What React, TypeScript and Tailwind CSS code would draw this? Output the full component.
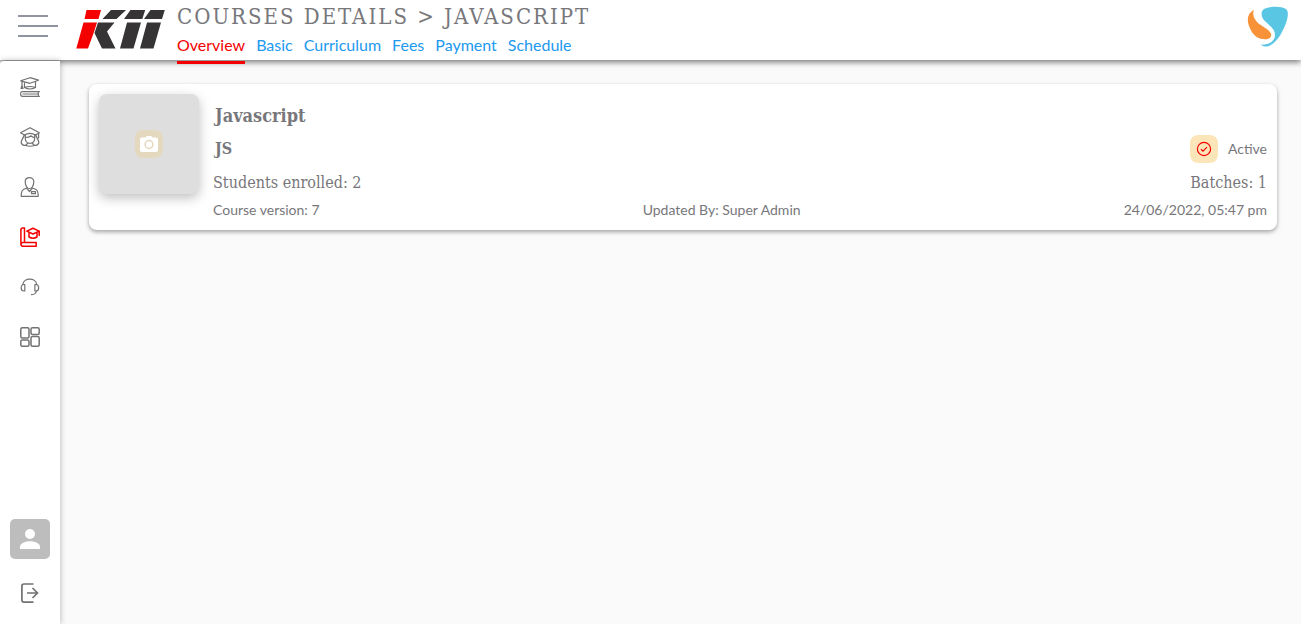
import React from "react";

const slab = "font-['Roboto_Slab','DejaVu_Serif_Condensed','DejaVu_Serif',serif]";

const tabs = ["Overview", "Basic", "Curriculum", "Fees", "Payment", "Schedule"];

function BrandLogo() {
  return (
    <svg viewBox="0 0 90 40" className="h-10 w-[90px]" role="img" aria-label="KII">
      <path fill="#f40000" d="M10.500 1H25L22.500 10H8.500ZM7.500 13.500H21L17.800 23.500L12 39.500H.300Z" />
      <path
        fill="#373435"
        d="M35 1H50L40.500 10H26.500ZM22 13.500H38.500L31 22.500L39.500 39.500H26L18.500 24ZM54.500 1H69.200L66.300 10H48ZM51 13.500H65L57.500 39.500H44ZM74.500 1H88.800L86 10H68ZM71 13.500H85L77.500 39.500H64Z"
      />
    </svg>
  );
}

function SwirlLogo() {
  return (
    <svg viewBox="0 0 42 42" className="h-[42px] w-[42px]" role="img" aria-label="Company">
      <path
        fill="#f79239"
        d="M7 4C1 7-.500 13 2 20C5 28 10 33 16 33C22 34 25 31 24 28C23 24 16 21 11 17C7 13 5 8 7 4Z"
      />
      <path
        fill="#59c6e4"
        d="M17 3C23 0 34 0 39 3C43 6 40 17 35 26C31 34 24 41 18 40.500C16 40.500 15 39.500 14 38.500C22 39.500 28 35 28 29C28 23 23 20 19 16C14 12 13 6 17 3Z"
      />
    </svg>
  );
}

function Icon({ children }: { children: React.ReactNode }) {
  return (
    <svg
      viewBox="0 0 20 20"
      className="h-5 w-5"
      fill="none"
      stroke="currentColor"
      strokeWidth="1.2"
      strokeLinecap="round"
      strokeLinejoin="round"
      aria-hidden="true"
    >
      {children}
    </svg>
  );
}

const navItems = [
  {
    label: "Academics",
    icon: (
      <>
        <path d="M.7 3.800L10 .7L18.500 3.200L10 6.300ZM4.500 5V10.500Q10 8.500 15.500 10.500V5M4.500 10.500Q10 13.500 15.500 10.500M2 4.500V8.500M2 8.500L1 11.500H3Z" />
        <path d="M19.400 14.600H2.500Q.6 14.600.6 16.900Q.6 19.300 2.500 19.300H19.400M18.300 14.800V19.200M3 17H18" />
      </>
    ),
  },
  {
    label: "Students",
    icon: (
      <>
        <path d="M.6 5.800L10 .7L19.400 5.800L15.500 8Q10 4.800 4.500 8ZM18.600 6.300V11" />
        <path d="M5.300 8V11.500C5.300 18 14.700 18 14.700 11.500V8M5.300 10.500Q9 10.500 11 8.800Q12.500 10.500 14.700 10.500M4.200 8C3 12 1 13 1.200 16C2 18 4 18.500 5.500 18.500L7.500 16.500M15.800 8C17 12 19 13 18.800 16C18 18 16 18.500 14.500 18.500L12.500 16.500M5.500 18.500Q10 20 14.500 18.500" />
      </>
    ),
  },
  {
    label: "Staff",
    icon: (
      <>
        <path d="M5.200 4.800C5.200-.800 13.800-.800 13.800 4.800C13.800 9 11.500 11.500 9.500 11.500S5.200 9 5.200 4.800Z" />
        <path d="M6.500 11L3.500 12.500C1.500 13.500 1.200 15.500 1.200 19.300H18.200C18.200 15.500 18 13.500 16 12.500L12.500 11M6.500 11L9.500 14.500L12.500 11M11.500 14.700H15.500V16.700H11.500Z" />
      </>
    ),
  },
  {
    label: "Courses",
    active: true,
    icon: (
      <g strokeWidth="1.5">
        <path d="M4.500.9H3Q.9.900.9 3V17Q.9 19.200 3 19.200H16.200V15.600H3Q.9 15.600.9 17.400M4.500.9V15.300" />
        <path d="M6.800 4.100L13 1.200L19.200 4.100L13 7ZM9 5.500V10Q13 12.500 17 10V5.500M19.200 4.500V8.500" />
      </g>
    ),
  },
  {
    label: "Support",
    icon: (
      <>
        <path d="M2.800 7.500C3.500.300 16 .300 16.700 7.500M16.500 14C16 17 14 17.600 11.500 17.600" />
        <path d="M4.800 7.500H3.800C.3 7.500.3 14 3.800 14H4.800ZM14.900 7.500H15.900C19.600 7.500 19.600 14 15.900 14H14.900Z" />
      </>
    ),
  },
  {
    label: "Dashboard",
    icon: (
      <g strokeWidth="1.5">
        <rect x=".8" y=".8" width="8.200" height="10.200" rx="1.500" />
        <rect x="11" y=".8" width="8.200" height="6.700" rx="1.500" />
        <rect x=".8" y="13" width="8.200" height="6.200" rx="1.500" />
        <rect x="11" y="9.500" width="8.200" height="9.700" rx="1.500" />
      </g>
    ),
  },
];

function Header() {
  return (
    <header className="relative flex h-15 shrink-0 bg-white pr-3 shadow-[0_2px_6px_rgba(0,0,0,0.55)]">
      <button type="button" aria-label="Toggle menu" className="ml-[18px] mt-[15px] flex h-[22px] w-10 flex-col justify-between">
        <span className="h-0.5 w-[30px] bg-[#9094a1]" />
        <span className="h-0.5 w-10 bg-[#9094a1]" />
        <span className="h-0.5 w-[30px] bg-[#9094a1]" />
      </button>
      <a href="#home" className="ml-[18px] mt-[9px]">
        <BrandLogo />
      </a>
      <div className="ml-[11px] flex flex-col">
        <h1 className={`${slab} mt-0.5 text-[22px] leading-[30px] font-medium tracking-[2px] whitespace-nowrap text-[#77777b]`}>
          COURSES DETAILS &gt; JAVASCRIPT
        </h1>
        <nav aria-label="Course sections" className="flex gap-[11px] text-base leading-[26px]">
          {tabs.map((tab, i) => (
            <a
              key={tab}
              href={`#${tab.toLowerCase()}`}
              className={i === 0 ? "h-8 border-b-3 border-[#f40000] text-[#f40000]" : "h-8 text-[#2199ef]"}
            >
              {tab}
            </a>
          ))}
        </nav>
      </div>
      <a href="#company" className="ml-auto mt-1.5">
        <SwirlLogo />
      </a>
    </header>
  );
}

function Sidebar() {
  return (
    <aside className="z-10 mt-px flex w-[60px] shrink-0 flex-col items-center rounded-tl bg-white pt-4 pb-[21px] shadow-[0_0_6px_rgba(0,0,0,0.3)]">
      <nav aria-label="Main" className="flex flex-col gap-[30px]">
        {navItems.map((item) => (
          <a key={item.label} href={`#${item.label.toLowerCase()}`} aria-label={item.label} className={item.active ? "text-[#f40000]" : "text-[#727272]"}>
            <Icon>{item.icon}</Icon>
          </a>
        ))}
      </nav>
      <button type="button" aria-label="Profile" className="mt-auto flex h-10 w-10 items-center justify-center rounded-[5px] bg-[#bdbdbd]">
        <svg viewBox="0 0 20 20" className="h-5 w-5" fill="white" aria-hidden="true">
          <circle cx="10" cy="5" r="5" />
          <path d="M0 20V17.500C0 14 6.500 12.300 10 12.300S20 14 20 17.500V20Z" />
        </svg>
      </button>
      <button type="button" aria-label="Log out" className="mt-6 text-[#727272]">
        <svg viewBox="0 0 20 20" className="h-5 w-5" fill="none" stroke="currentColor" strokeWidth="1.7" aria-hidden="true">
          <path d="M13.500 1H4Q1.900 1 1.900 3V17Q1.900 19.100 4 19.100H13.500M7 10H17.500M12.500 5L17.500 10L12.500 15" />
        </svg>
      </button>
    </aside>
  );
}

function CourseCard() {
  return (
    <article className="flex rounded-lg bg-white p-2.5 text-[#77777b] shadow-[0_2px_4px_rgba(0,0,0,0.35)]">
      <button
        type="button"
        aria-label="Upload course picture"
        className="flex h-[100px] w-[100px] shrink-0 items-center justify-center rounded-lg bg-[#dedede] shadow-[0_4px_12px_rgba(0,0,0,0.25)]"
      >
        <span className="flex h-7 w-7 items-center justify-center rounded-lg bg-[#e4d8be]">
          <svg viewBox="0 0 18 16" className="h-4 w-[18px]" aria-hidden="true">
            <path fill="white" d="M5.500 1.500L6.800 0H11.200L12.500 1.500H16Q18 1.500 18 3.500V14Q18 16 16 16H2Q0 16 0 14V3.500Q0 1.500 2 1.500Z" />
            <circle cx="9" cy="8.500" r="3.900" fill="none" stroke="#e4d8be" strokeWidth="1.5" />
          </svg>
        </span>
      </button>
      <div className="ml-3.5 flex min-w-0 flex-1 flex-col">
        <h2 className={`${slab} mt-2.5 pl-0.5 text-lg leading-6 font-bold`}>Javascript</h2>
        <div className="mt-[7px] flex h-7 items-center justify-between">
          <span className={`${slab} pl-0.5 text-base font-bold`}>JS</span>
          <span className="flex items-center gap-2.5 text-sm">
            <span className="flex h-7 w-7 items-center justify-center rounded-lg bg-[#fce6b9]">
              <svg viewBox="0 0 16 16" className="h-4 w-4" fill="none" stroke="#f40000" strokeWidth="1.2" aria-hidden="true">
                <circle cx="8" cy="8" r="6.600" />
                <path d="M5 8.200L7 10.100L11 6.100" />
              </svg>
            </span>
            Active
          </span>
        </div>
        <div className={`${slab} mt-2 flex justify-between text-base leading-6`}>
          <span>Students enrolled: 2</span>
          <span>Batches: 1</span>
        </div>
        <div className="mt-[5px] flex justify-between text-sm leading-5">
          <span>Course version: 7</span>
          <span>Updated By: Super Admin</span>
          <span>24/06/2022, 05:47 pm</span>
        </div>
      </div>
    </article>
  );
}

export default function App() {
  return (
    <div className="flex min-h-screen flex-col bg-[#fafafa] font-['Lato',sans-serif]">
      <Header />
      <div className="flex flex-1">
        <Sidebar />
        <main className="min-w-0 flex-1 pt-6 pr-6 pb-6 pl-[29px]">
          <CourseCard />
        </main>
      </div>
    </div>
  );
}
